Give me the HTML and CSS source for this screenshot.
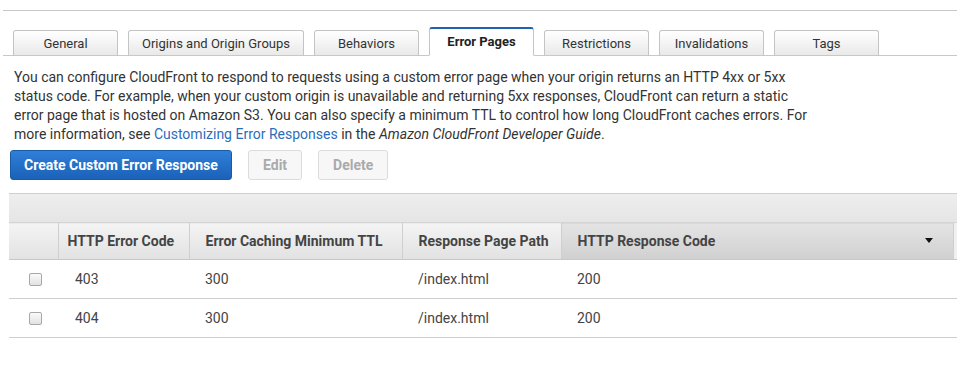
FILE: index.html
```html
<!DOCTYPE html>
<html lang="en">
<head>
    <meta charset="UTF-8">
    <title>Error Pages</title>
    <link rel="stylesheet" href="styles.css">
</head>
<body>
    <div class="top-rule"></div>

    <!-- Distribution tabs -->
    <div class="tabs">
        <div class="tab">General</div>
        <div class="tab wide">Origins and Origin Groups</div>
        <div class="tab">Behaviors</div>
        <div class="tab active">Error Pages</div>
        <div class="tab">Restrictions</div>
        <div class="tab">Invalidations</div>
        <div class="tab">Tags</div>
    </div>

    <p class="intro">You can configure CloudFront to respond to requests using a custom error page when your origin returns an HTTP 4xx or 5xx status code. For example, when your custom origin is unavailable and returning 5xx responses, CloudFront can return a static error page that is hosted on Amazon S3. You can also specify a minimum TTL to control how long CloudFront caches errors. For more information, see <a href="#">Customizing Error Responses</a> in the <em>Amazon CloudFront Developer Guide</em>.</p>

    <div class="actions">
        <button class="btn primary">Create Custom Error Response</button>
        <button class="btn" disabled>Edit</button>
        <button class="btn" disabled>Delete</button>
    </div>

    <div class="grid">
        <div class="grid-band"></div>
        <table>
            <colgroup>
                <col style="width: 49px">
                <col style="width: 131px">
                <col style="width: 213px">
                <col style="width: 159px">
                <col style="width: 392px">
                <col style="width: 20px">
            </colgroup>
            <thead>
                <tr>
                    <th></th>
                    <th class="first">HTTP Error Code</th>
                    <th>Error Caching Minimum TTL</th>
                    <th>Response Page Path</th>
                    <th class="sorted">HTTP Response Code <span class="caret"></span></th>
                    <th class="extra"></th>
                </tr>
            </thead>
            <tbody>
                <tr>
                    <td class="check"><span class="box"></span></td>
                    <td>403</td>
                    <td>300</td>
                    <td>/index.html</td>
                    <td>200</td>
                    <td></td>
                </tr>
                <tr>
                    <td class="check"><span class="box"></span></td>
                    <td>404</td>
                    <td>300</td>
                    <td>/index.html</td>
                    <td>200</td>
                    <td></td>
                </tr>
            </tbody>
        </table>
    </div>
</body>
</html>
```

FILE: styles.css
```css
html {
    overflow: hidden;
}
body {
    margin: 0;
    font-family: Roboto, "Liberation Sans", sans-serif;
    color: #333;
    background: #fff;
}
.top-rule {
    margin: 10px 0 0 3px;
    border-top: 1px solid #c8c8c8;
}
.tabs {
    display: flex;
    gap: 10px;
    margin: 18px 0 0 3px;
    padding-left: 10px;
    border-bottom: 1px solid #c8c8c8;
    height: 26px;
    align-items: flex-end;
}
.tab {
    box-sizing: border-box;
    width: 105px;
    height: 26px;
    margin-bottom: -1px;
    border: 1px solid #c4c4c4;
    border-bottom-color: #c8c8c8;
    border-radius: 3px 3px 0 0;
    background: linear-gradient(#ffffff, #e9e9e9);
    font-size: 13px;
    color: #333;
    text-align: center;
    line-height: 25px;
}
.tab.wide {
    width: 176px;
}
.tab.active {
    height: 29px;
    border-top: 2px solid #1e62b0;
    border-bottom-color: #fff;
    background: #fff;
    font-weight: bold;
    color: #222;
    line-height: 26px;
}
.intro {
    margin: 12px 0 0 14px;
    width: 800px;
    font-size: 14px;
    line-height: 19px;
    color: #333;
}
.intro a {
    color: #2a6ebb;
    text-decoration: none;
}
.actions {
    display: flex;
    gap: 16px;
    margin: 6px 0 0 10px;
}
.btn {
    height: 30px;
    padding: 0 14px;
    border: 1px solid #dcdcdc;
    border-radius: 3px;
    background: #f7f7f7;
    font-family: Roboto, "Liberation Sans", sans-serif;
    font-size: 14px;
    font-weight: bold;
    color: #aaa;
    white-space: nowrap;
}
.btn.primary {
    width: 222px;
    padding: 0;
    border-color: #1a5ba8;
    background: linear-gradient(#2f7fd8, #1b62b8);
    color: #fff;
}
.grid {
    margin: 13px 0 0 9px;
}
.grid-band {
    height: 28px;
    border-top: 1px solid #cfcfcf;
    background: linear-gradient(#eeeeee, #e5e5e5);
}
table {
    border-collapse: collapse;
    table-layout: fixed;
    width: 964px;
    font-size: 14px;
}
th {
    height: 36px;
    padding: 0 0 0 16px;
    border-left: 1px solid #cfcfcf;
    border-top: 1px solid #d4d4d4;
    border-bottom: 1px solid #c8c8c8;
    background: linear-gradient(#f4f4f4, #e2e2e2);
    text-align: left;
    font-weight: bold;
    color: #444;
    white-space: nowrap;
}
th:first-child {
    border-left: none;
}
th.first {
    padding-left: 9px;
}
th.sorted {
    position: relative;
    background: linear-gradient(#e4e4e4, #d0d0d0);
}
th.extra {
    background: #f0f0f0;
}
.caret {
    position: absolute;
    right: 20px;
    top: 15px;
    border-left: 4px solid transparent;
    border-right: 4px solid transparent;
    border-top: 5px solid #111;
}
td {
    height: 38px;
    padding: 0 0 0 16px;
    border-bottom: 1px solid #cfcfcf;
    color: #444;
}
td:nth-child(2) {
    padding-left: 17px;
}
td.check {
    padding-left: 20px;
}
.box {
    display: block;
    width: 11px;
    height: 11px;
    border: 1px solid #a8a8a8;
    border-radius: 2px;
    background: linear-gradient(#fafafa, #e2e2e2);
}
```
